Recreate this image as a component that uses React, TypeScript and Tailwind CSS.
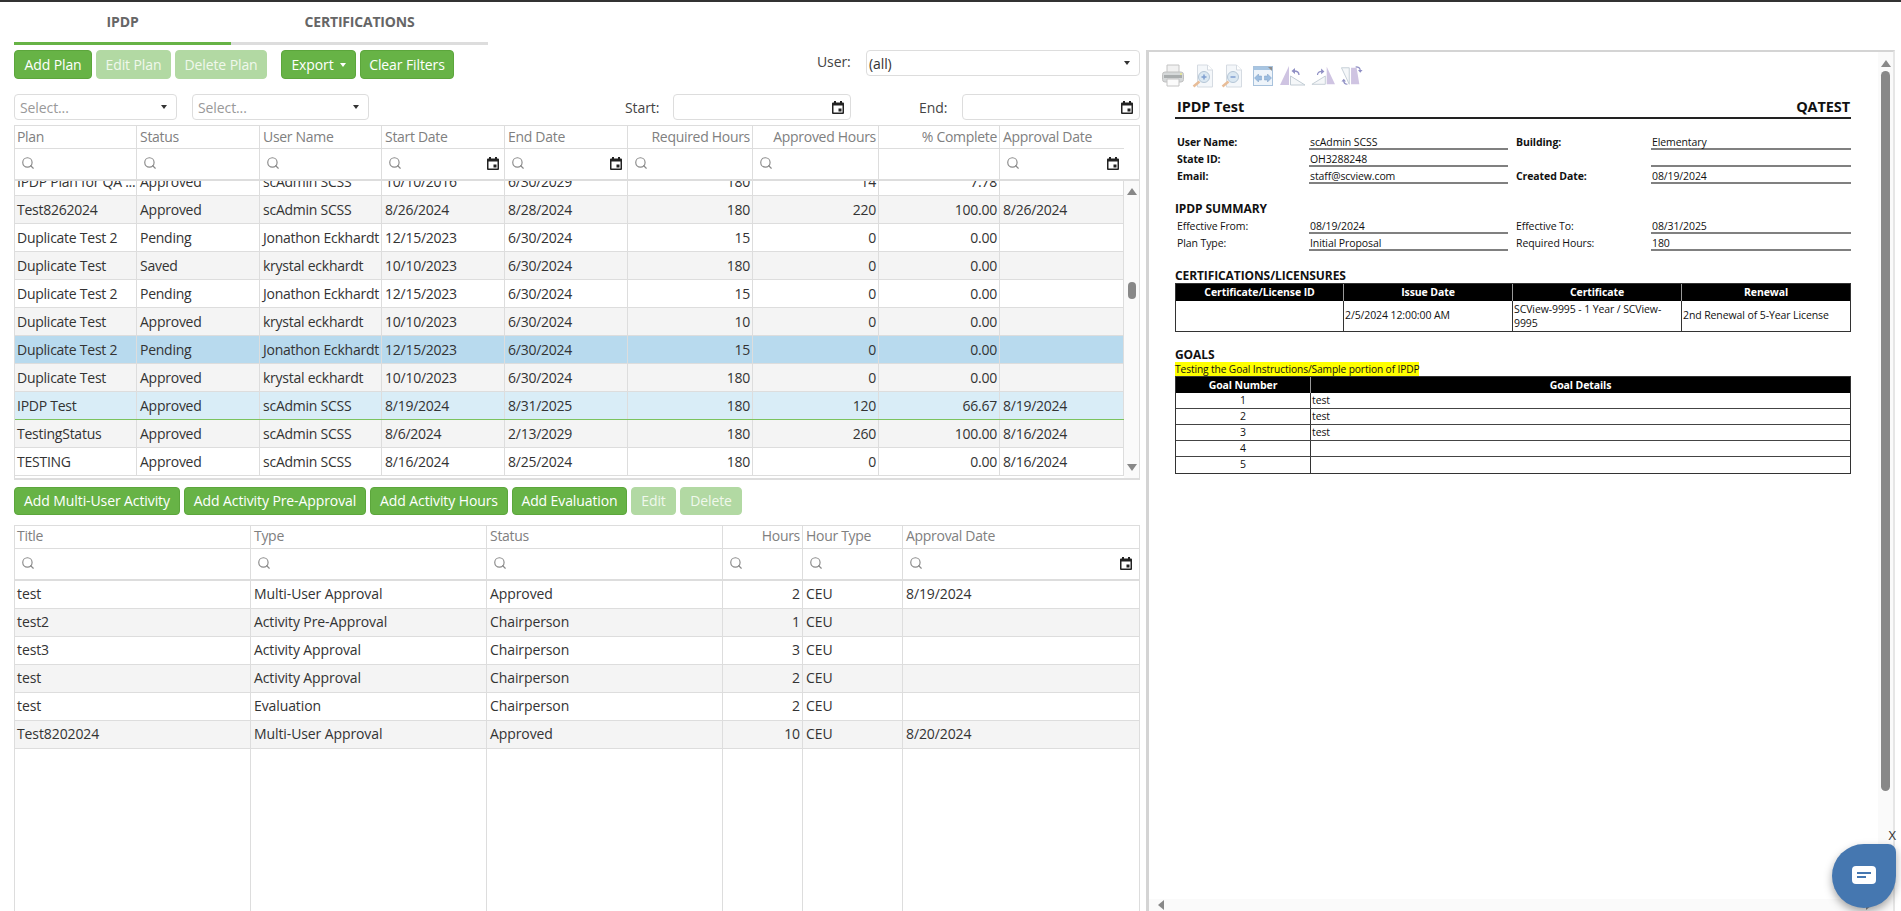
import { Search } from "lucide-react"

const font = "font-['Open_Sans','Liberation_Sans',sans-serif]"

const plans = [
  ["IPDP Plan for QA ...", "Approved", "scAdmin SCSS", "10/10/2016", "6/30/2029", "180", "14", "7.78", ""],
  ["Test8262024", "Approved", "scAdmin SCSS", "8/26/2024", "8/28/2024", "180", "220", "100.00", "8/26/2024"],
  ["Duplicate Test 2", "Pending", "Jonathon Eckhardt", "12/15/2023", "6/30/2024", "15", "0", "0.00", ""],
  ["Duplicate Test", "Saved", "krystal eckhardt", "10/10/2023", "6/30/2024", "180", "0", "0.00", ""],
  ["Duplicate Test 2", "Pending", "Jonathon Eckhardt", "12/15/2023", "6/30/2024", "15", "0", "0.00", ""],
  ["Duplicate Test", "Approved", "krystal eckhardt", "10/10/2023", "6/30/2024", "10", "0", "0.00", ""],
  ["Duplicate Test 2", "Pending", "Jonathon Eckhardt", "12/15/2023", "6/30/2024", "15", "0", "0.00", ""],
  ["Duplicate Test", "Approved", "krystal eckhardt", "10/10/2023", "6/30/2024", "180", "0", "0.00", ""],
  ["IPDP Test", "Approved", "scAdmin SCSS", "8/19/2024", "8/31/2025", "180", "120", "66.67", "8/19/2024"],
  ["TestingStatus", "Approved", "scAdmin SCSS", "8/6/2024", "2/13/2029", "180", "260", "100.00", "8/16/2024"],
  ["TESTING", "Approved", "scAdmin SCSS", "8/16/2024", "8/25/2024", "180", "0", "0.00", "8/16/2024"],
]
const planRowBg = ["bg-white", "bg-[#f4f4f4]", "bg-white", "bg-[#f4f4f4]", "bg-white", "bg-[#f4f4f4]", "bg-[#b8daee]", "bg-[#f4f4f4]", "bg-[#d9edf7] border-b-[#7cc35e]", "bg-[#f4f4f4]", "bg-white"]

const activities = [
  ["test", "Multi-User Approval", "Approved", "2", "CEU", "8/19/2024"],
  ["test2", "Activity Pre-Approval", "Chairperson", "1", "CEU", ""],
  ["test3", "Activity Approval", "Chairperson", "3", "CEU", ""],
  ["test", "Activity Approval", "Chairperson", "2", "CEU", ""],
  ["test", "Evaluation", "Chairperson", "2", "CEU", ""],
  ["Test8202024", "Multi-User Approval", "Approved", "10", "CEU", "8/20/2024"],
]

const planCols = "grid-cols-[122px_123px_122px_123px_123px_125px_126px_121px_124px]"
const actCols = "grid-cols-[236px_236px_236px_80px_100px_236px]"

function Calendar() {
  return (
    <svg width="12" height="13" viewBox="0 0 12 13" className="shrink-0">
      <path d="M2 0h2v1.500h4V0h2v1.500h1a1 1 0 0 1 1 1V12a1 1 0 0 1-1 1H1a1 1 0 0 1-1-1V2.500a1 1 0 0 1 1-1h1z" fill="#222" />
      <rect x="1.500" y="4.500" width="9" height="7" fill="#fff" />
      <rect x="6.500" y="7.500" width="3" height="3" fill="#222" />
    </svg>
  )
}

function Caret({ color = "border-t-[#333]" }: { color?: string }) {
  return <span className={`inline-block w-0 h-0 border-x-[3.5px] border-x-transparent border-t-[4px] ${color}`} />
}

function Btn({ label, w, off }: { label: string; w: string; off?: boolean }) {
  return (
    <button
      className={`${w} h-full rounded-[4px] border text-[14px] text-center whitespace-nowrap ${
        off ? "bg-[#b2d9a3] border-[#b2d9a3] text-[#f0f8ec]" : "bg-[#67b346] border-[#5ca63c] text-white"
      }`}
    >
      {label}
    </button>
  )
}

function Field({ w, pr = "pr-[9px]", children }: { w: string; pr?: string; children?: React.ReactNode }) {
  return (
    <div className={`${w} ${pr} h-[26px] rounded-[4px] border border-[#ddd] bg-white flex items-center justify-between pl-[5px] text-[14px] text-[#999]`}>
      {children}
    </div>
  )
}

function FilterCell({ date, off, last, pr = "pr-[5px]" }: { date?: boolean; off?: boolean; last?: boolean; pr?: string }) {
  return (
    <div className={`h-full flex items-center justify-between pb-[2px] pl-[6px] ${pr} ${last ? "" : "border-r border-[#ddd]"}`}>
      {!off && <Search size={14} strokeWidth={2} className="text-[#8a8a8a]" />}
      {date && <Calendar />}
    </div>
  )
}

function HeadCell({ label, end, last, lead = "leading-[22px]" }: { label: string; end?: boolean; last?: boolean; lead?: string }) {
  return (
    <div className={`h-full pl-[3px] first:pl-[2px] pr-[2px] ${lead} text-[14px] tracking-[-0.3px] text-[#808080] whitespace-nowrap ${end ? "text-right" : ""} ${last ? "" : "border-r border-[#ddd]"}`}>
      {label}
    </div>
  )
}

function PlanGrid() {
  const heads = ["Plan", "Status", "User Name", "Start Date", "End Date", "Required Hours", "Approved Hours", "% Complete", "Approval Date"]
  return (
    <div className="mt-[5px] h-[355px] border border-[#ddd] border-b-2 flex flex-col text-[#333]">
      <div className={`grid ${planCols} w-[1109px] h-[23px] border-b border-[#ddd] shrink-0`}>
        {heads.map((h, i) => (
          <HeadCell key={h} label={h} end={i >= 5 && i <= 7} last={i === 8} />
        ))}
      </div>
      <div className={`grid ${planCols} w-[1109px] h-[30px] shrink-0`}>
        {heads.map((h, i) => (
          <FilterCell key={h} date={i === 3 || i === 4 || i === 8} off={i === 7} last={i === 8} />
        ))}
      </div>
      <div className="h-[2px] bg-[#ddd] shrink-0" />
      <div className="flex-1 flex min-h-0">
        <div className="w-[1109px] flex flex-col justify-end overflow-hidden pb-[2px]">
          {plans.map((row, r) => (
            <div key={r} className={`grid ${planCols} h-[28px] shrink-0 border-b border-[#ddd] ${planRowBg[r]}`}>
              {row.map((c, i) => (
                <div key={i} className={`pl-[3px] first:pl-[2px] pr-[2px] leading-[27px] text-[14px] tracking-[-0.25px] whitespace-nowrap overflow-hidden border-r border-[#ddd] ${i >= 5 && i <= 7 ? "text-right" : ""}`}>
                  {c}
                </div>
              ))}
            </div>
          ))}
        </div>
        <div className="w-[15px] bg-[#fafafa] flex flex-col items-center">
          <span className="mt-[7px] w-0 h-0 border-x-[5px] border-x-transparent border-b-[7px] border-b-[#888]" />
          <span className="mt-[87px] w-[8px] h-[17px] rounded-[4px] bg-[#888]" />
          <span className="mt-auto mb-[7px] w-0 h-0 border-x-[5px] border-x-transparent border-t-[7px] border-t-[#888]" />
        </div>
      </div>
    </div>
  )
}

function ActivityGrid() {
  const heads = ["Title", "Type", "Status", "Hours", "Hour Type", "Approval Date"]
  return (
    <div className="mt-[10px] flex-1 min-h-0 border border-[#ddd] border-b-0 flex flex-col text-[#333]">
      <div className={`grid ${actCols} h-[23px] border-b border-[#ddd] shrink-0`}>
        {heads.map((h, i) => (
          <HeadCell key={h} label={h} end={i === 3} last={i === 5} lead="leading-[20px]" />
        ))}
      </div>
      <div className={`grid ${actCols} h-[30px] shrink-0`}>
        {heads.map((h, i) => (
          <FilterCell key={h} date={i === 5} last={i === 5} pr="pr-[7px]" />
        ))}
      </div>
      <div className="h-[2px] bg-[#ddd] shrink-0" />
      {activities.map((row, r) => (
        <div key={r} className={`grid ${actCols} h-[28px] shrink-0 border-b border-[#ddd] ${r % 2 ? "bg-[#f4f4f4]" : "bg-white"}`}>
          {row.map((c, i) => (
            <div key={i} className={`pl-[3px] first:pl-[2px] pr-[2px] leading-[26px] text-[14px] whitespace-nowrap ${i === 3 ? "text-right" : ""} ${i < 5 ? "border-r border-[#ddd]" : ""}`}>
              {c}
            </div>
          ))}
        </div>
      ))}
      <div className={`grid ${actCols} flex-1`}>
        {heads.slice(0, 5).map((h) => (
          <div key={h} className="border-r border-[#ddd]" />
        ))}
      </div>
    </div>
  )
}

function Printer() {
  return (
    <svg width="22" height="24" viewBox="0 0 22 24">
      <path d="M5 1h12v9H5z" fill="#f1f1f1" stroke="#c4c4c4" />
      <rect x="0.500" y="8" width="21" height="10" rx="2.500" fill="#d5d8d9" stroke="#c0c0c0" />
      <rect x="2" y="11" width="18" height="3" fill="#a9adae" />
      <circle cx="19" cy="10" r="1" fill="#e8e88a" />
      <path d="M5 15h12v7H5z" fill="#fbfbfb" stroke="#c4c4c4" />
    </svg>
  )
}

function PageZoom({ minus }: { minus?: boolean }) {
  return (
    <svg width="22" height="24" viewBox="0 0 22 24">
      <path d="M5.500 1h10l5 5v17h-15z" fill="#f4f7fa" stroke="#d5dbe2" />
      <path d="M15.500 1v5h5" fill="#fff" stroke="#d5dbe2" />
      <circle cx="12" cy="13" r="5.500" fill="#dbe8f2" stroke="#b5c6d6" />
      <path d={minus ? "M9.500 13h5" : "M9.500 13h5M12 10.500v5"} stroke="#7f9ed0" strokeWidth="1.500" />
      <path d="M7.500 17.500l-6 5" stroke="#e8bd98" strokeWidth="2.500" />
    </svg>
  )
}

function FitWidth() {
  return (
    <svg width="20" height="20" viewBox="0 0 20 20">
      <rect x="0.500" y="0.500" width="19" height="19" fill="#eef4fa" stroke="#a8c2dc" />
      <rect x="1" y="1" width="18" height="3" fill="#a7c5e2" />
      <path d="M15 1h4v4z" fill="#8e8e8e" />
      <path d="M1.500 12l4-4v2h3v4h-3v2zM18.500 12l-4-4v2h-3v4h3v2z" fill="#9cbde0" stroke="#7d9fc5" strokeWidth="0.500" />
    </svg>
  )
}

function Rotate({ kind }: { kind: number }) {
  if (kind === 0)
    return (
      <svg width="26" height="20" viewBox="0 0 26 20">
        <path d="M9 0v19H0z" fill="#cfc4e2" />
        <path d="M10.500 10L25 19H10.500z" fill="#f5f7f9" stroke="#c2ccd4" />
        <path d="M19 9c0-3-2-4-5-4" fill="none" stroke="#8f8fc4" strokeWidth="1.300" />
        <path d="M15 2l-3.500 3 3.500 3z" fill="#8f8fc4" />
      </svg>
    )
  if (kind === 1)
    return (
      <svg width="24" height="20" viewBox="0 0 26 20">
        <path d="M17 0v19h9z" fill="#cfc4e2" />
        <path d="M15.500 10L1 19h14.500z" fill="#f5f7f9" stroke="#c2ccd4" />
        <path d="M7 9c0-3 2-4 5-4" fill="none" stroke="#8f8fc4" strokeWidth="1.300" />
        <path d="M11 2l3.500 3-3.500 3z" fill="#8f8fc4" />
      </svg>
    )
  return (
    <svg width="22" height="22" viewBox="0 0 24 22">
      <path d="M0.500 2H9v18z" fill="#f5f7f9" stroke="#c2ccd4" />
      <path d="M11 20V2h6l3 18z" fill="#cfc4e2" />
      <path d="M16 1c3 0 5 1 5 4" fill="none" stroke="#8f8fc4" strokeWidth="1.300" />
      <path d="M18.500 4.500l2.500 3 2.500-3z" fill="#8f8fc4" />
      <path d="M7 20c-3 0-4-1-4-4" fill="none" stroke="#8f8fc4" strokeWidth="1.300" />
      <path d="M0.500 17l2.500-3 2.500 3z" fill="#8f8fc4" />
    </svg>
  )
}

function InfoRows({ rows, bold }: { rows: string[][]; bold?: boolean }) {
  return (
    <div className="grid grid-cols-[134px_199px_143px_200px] text-[10.5px] text-[#111]">
      {rows.map((r, i) => (
        <div key={i} className="contents">
          <div className={`h-[17px] pl-[2px] leading-[19px] ${bold ? "font-bold" : ""}`}>{r[0]}</div>
          <div className="h-[17px] pl-[1px] leading-[18px] border-b-2 border-[#808080]">{r[1]}</div>
          <div className={`h-[17px] pl-[8px] leading-[19px] ${bold ? "font-bold" : ""}`}>{r[2]}</div>
          <div className="h-[17px] pl-[1px] leading-[18px] border-b-2 border-[#808080]">{r[3]}</div>
        </div>
      ))}
    </div>
  )
}

function Report() {
  const headCell = "bg-black text-white font-bold text-center leading-[16px] border-r border-[#999] last:border-r-0"
  return (
    <div className="ml-[26px] w-[676px] text-[#111]">
      <div className="mt-[9px] h-[22px] flex justify-between items-center pl-[2px] pr-[1px] pb-[1px] border-b-2 border-[#222] text-[14.5px] font-bold">
        <span>IPDP Test</span>
        <span>QATEST</span>
      </div>
      <div className="mt-[14px]">
        <InfoRows
          bold
          rows={[
            ["User Name:", "scAdmin SCSS", "Building:", "Elementary"],
            ["State ID:", "OH3288248", "", ""],
            ["Email:", "staff@scview.com", "Created Date:", "08/19/2024"],
          ]}
        />
      </div>
      <h3 className="mt-[17px] h-[16px] leading-[16px] text-[12px] font-bold">IPDP SUMMARY</h3>
      <InfoRows
        rows={[
          ["Effective From:", "08/19/2024", "Effective To:", "08/31/2025"],
          ["Plan Type:", "Initial Proposal", "Required Hours:", "180"],
        ]}
      />
      <h3 className="mt-[17px] h-[15px] leading-[15px] text-[12px] font-bold">CERTIFICATIONS/LICENSURES</h3>
      <div className="border border-[#333] text-[10.5px]">
        <div className="grid grid-cols-[168px_169px_169px_168px] h-[17px]">
          {["Certificate/License ID", "Issue Date", "Certificate", "Renewal"].map((h) => (
            <div key={h} className={headCell}>
              {h}
            </div>
          ))}
        </div>
        <div className="grid grid-cols-[168px_169px_169px_168px] h-[30px] items-stretch">
          <div className="border-r border-[#333]" />
          <div className="border-r border-[#333] flex items-center pl-[1px]">2/5/2024 12:00:00 AM</div>
          <div className="border-r border-[#333] flex items-center pl-[1px] leading-[14px]">SCView-9995 - 1 Year / SCView-9995</div>
          <div className="flex items-center pl-[1px] whitespace-nowrap">2nd Renewal of 5-Year License</div>
        </div>
      </div>
      <h3 className="mt-[15px] h-[15px] leading-[15px] text-[12px] font-bold">GOALS</h3>
      <div className="h-[14px] leading-[14px] text-[10.2px] w-[244px] whitespace-nowrap bg-[#ffff00]">Testing the Goal Instructions/Sample portion of IPDP</div>
      <div className="border border-[#333] text-[10.5px]">
        <div className="grid grid-cols-[135px_539px] h-[16px]">
          <div className={headCell}>Goal Number</div>
          <div className={headCell}>Goal Details</div>
        </div>
        {["test", "test", "test", "", ""].map((g, i) => (
          <div key={i} className="grid grid-cols-[135px_539px] h-[16px] border-b border-[#444] last:border-b-0 leading-[15px]">
            <div className="text-center border-r border-[#333]">{i + 1}</div>
            <div className="pl-[1px]">{g}</div>
          </div>
        ))}
      </div>
    </div>
  )
}

export default function App() {
  return (
    <div className={`${font} w-[1901px] h-[911px] relative overflow-hidden bg-white flex flex-col tracking-[-0.1px]`}>
      <div className="h-[2px] bg-[#333] shrink-0" />
      <div className="flex-1 min-h-0 flex">
        <div className="w-[1126px] ml-[14px] flex flex-col">
          <div className="w-[474px] shrink-0 border-b-[3px] border-[#ddd] h-[43px] flex relative">
            <div className="w-[217px] h-[40px] pb-[1px] flex items-center justify-center text-[14px] font-bold text-[#666]">IPDP</div>
            <div className="w-[257px] h-[40px] pb-[1px] flex items-center justify-center text-[14px] font-bold tracking-[-0.2px] text-[#666]">CERTIFICATIONS</div>
            <span className="absolute left-0 bottom-[-3px] w-[217px] h-[3px] bg-[#67b346]" />
          </div>
          <div className="mt-[5px] h-[29px] shrink-0 flex">
            <Btn label="Add Plan" w="w-[78px]" />
            <div className="w-[4px]" />
            <Btn label="Edit Plan" w="w-[75px]" off />
            <div className="w-[4px]" />
            <Btn label="Delete Plan" w="w-[92px]" off />
            <div className="w-[14px]" />
            <button className="w-[75px] h-full rounded-[4px] border border-[#5ca63c] bg-[#67b346] text-[14px] text-white flex items-center justify-center gap-[6px]">
              Export <Caret color="border-t-white" />
            </button>
            <div className="w-[4px]" />
            <Btn label="Clear Filters" w="w-[94px]" />
            <div className="ml-auto flex">
              <span className="w-[33px] mr-[16px] leading-[24px] text-[14px] text-[#444]">User:</span>
              <div className="w-[274px] h-[26px] rounded-[4px] border border-[#ddd] flex items-center justify-between pl-[2px] pr-[9px] text-[14px] text-[#333]">
                (all) <Caret />
              </div>
            </div>
          </div>
          <div className="mt-[15px] h-[26px] shrink-0 flex">
            <Field w="w-[163px]">
              Select... <Caret />
            </Field>
            <div className="w-[15px]" />
            <Field w="w-[177px]">
              Select... <Caret />
            </Field>
            <div className="ml-auto flex items-center text-[14px] text-[#444]">
              <span className="w-[48px]">Start:</span>
              <Field w="w-[178px]" pr="pr-[6px]">
                <span />
                <Calendar />
              </Field>
              <span className="w-[43px] ml-[68px]">End:</span>
              <Field w="w-[178px]" pr="pr-[6px]">
                <span />
                <Calendar />
              </Field>
            </div>
          </div>
          <PlanGrid />
          <div className="mt-[7px] h-[28px] shrink-0 flex gap-[4px] [&>button]:pb-[2px]">
            <Btn label="Add Multi-User Activity" w="w-[166px]" />
            <Btn label="Add Activity Pre-Approval" w="w-[182px]" />
            <Btn label="Add Activity Hours" w="w-[138px]" />
            <Btn label="Add Evaluation" w="w-[115px]" />
            <Btn label="Edit" w="w-[45px]" off />
            <Btn label="Delete" w="w-[62px]" off />
          </div>
          <ActivityGrid />
        </div>
        <div className="ml-[6px] mt-[48px] w-[749px] border-l-[3px] border-t-2 border-r-2 border-[#d4d4d4] border-r-[#e6e6e6] flex flex-col min-h-0">
          <div className="flex-1 min-h-0 flex">
            <div className="flex-1 min-w-0 overflow-hidden">
              <div className="pl-[13px] pt-[11px] h-[36px] flex items-center">
                <Printer />
                <span className="ml-[8px] flex"><PageZoom /></span>
                <span className="ml-[7px] flex"><PageZoom minus /></span>
                <span className="ml-[10px] flex"><FitWidth /></span>
                <span className="ml-[7px] flex"><Rotate kind={0} /></span>
                <span className="ml-[5px] flex"><Rotate kind={1} /></span>
                <span className="ml-[6px] flex"><Rotate kind={2} /></span>
              </div>
              <Report />
            </div>
            <div className="w-[15px] flex flex-col items-center bg-[#fafafa]">
              <span className="mt-[8px] w-0 h-0 border-x-[5px] border-x-transparent border-b-[7px] border-b-[#888]" />
              <span className="mt-[4px] w-[9px] h-[720px] rounded-[4.5px] bg-[#888]" />
            </div>
          </div>
          <div className="h-[12px] bg-[#fafafa] flex items-center justify-between px-[9px] shrink-0">
            <span className="w-0 h-0 border-y-[5px] border-y-transparent border-r-[6px] border-r-[#888]" />
            <span className="mr-[12px] w-0 h-0 border-y-[5px] border-y-transparent border-l-[6px] border-l-[#888]" />
          </div>
        </div>
      </div>
      <span className="absolute right-[5px] top-[826px] text-[13px] text-[#333]">X</span>
      <div className="absolute left-[1832px] top-[844px] w-[64px] h-[64px] rounded-[32px] rounded-tr-[8px] bg-[#4577b0] shadow-[0_4px_8px_rgba(0,0,0,0.35)] flex items-center justify-center">
        <svg width="24" height="20" viewBox="0 0 24 20">
          <path d="M4 0h16a4 4 0 0 1 4 4v10a4 4 0 0 1-4 4H4a4 4 0 0 1-4-4V4a4 4 0 0 1 4-4z" fill="#fff" />
          <path d="M5 7h14M5 11h9" stroke="#4577b0" strokeWidth="2" />
        </svg>
      </div>
    </div>
  )
}
